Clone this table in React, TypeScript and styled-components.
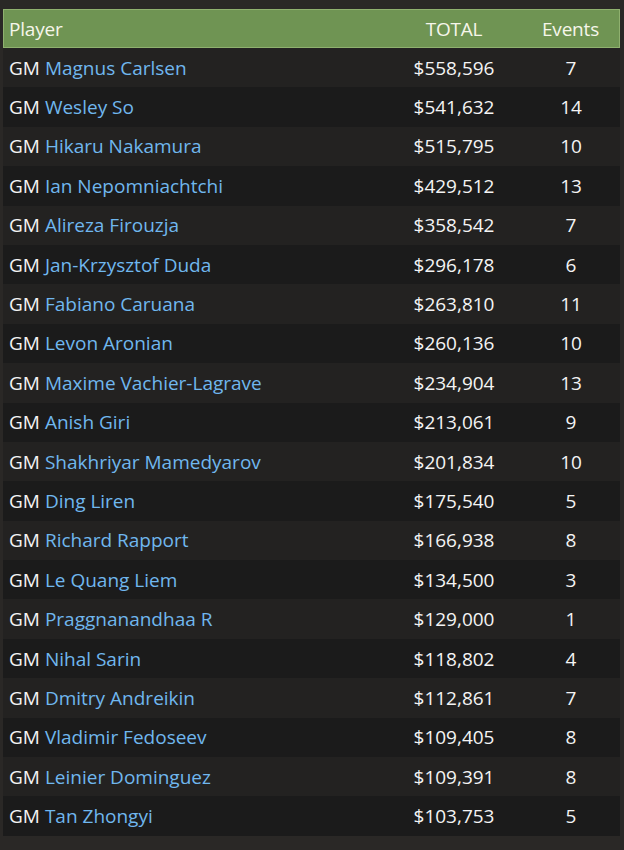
import React from "react";
import styled, { createGlobalStyle } from "styled-components";

const Global = createGlobalStyle`
  html, body { margin: 0; padding: 0; background: #2a2826; }
  body { font-family: "Open Sans", "Noto Sans", Arial, sans-serif; }
`;

const Page = styled.div`
  padding: 9px 4px 14px 3px;
  background: #2a2826;
  min-height: 850px;
  box-sizing: border-box;
`;

const Table = styled.div`
  display: grid;
  grid-template-columns: 383px 136px 98px;
  width: 617px;
`;

const HeaderCell = styled.div<{ $align?: string }>`
  height: 39px;
  box-sizing: border-box;
  background: #6f9453;
  border-top: 1px solid #8fb16f;
  border-bottom: 1px solid #8fb16f;
  color: #f6f6ea;
  font-size: 19px;
  letter-spacing: -0.2px;
  display: flex;
  align-items: center;
  justify-content: ${(p) => p.$align || "flex-start"};
  padding-left: ${(p) => (p.$align ? "0" : "5px")};
  &:first-child { border-left: 1px solid #8fb16f; }
  &:nth-child(3) { border-right: 1px solid #8fb16f; }
`;

const Cell = styled.div<{ $odd: boolean; $align?: string }>`
  height: 39.4px;
  background: ${(p) => (p.$odd ? "#232221" : "#1b1b1b")};
  color: #f4f4f4;
  font-size: 19px;
  display: flex;
  align-items: center;
  justify-content: ${(p) => p.$align || "flex-start"};
  padding-left: ${(p) => (p.$align ? "0" : "6px")};
  white-space: nowrap;
`;

const Name = styled.span`
  color: #70b7ee;
  margin-left: 5px;
`;

const players: [string, string, number][] = [
  ["Magnus Carlsen", "$558,596", 7],
  ["Wesley So", "$541,632", 14],
  ["Hikaru Nakamura", "$515,795", 10],
  ["Ian Nepomniachtchi", "$429,512", 13],
  ["Alireza Firouzja", "$358,542", 7],
  ["Jan-Krzysztof Duda", "$296,178", 6],
  ["Fabiano Caruana", "$263,810", 11],
  ["Levon Aronian", "$260,136", 10],
  ["Maxime Vachier-Lagrave", "$234,904", 13],
  ["Anish Giri", "$213,061", 9],
  ["Shakhriyar Mamedyarov", "$201,834", 10],
  ["Ding Liren", "$175,540", 5],
  ["Richard Rapport", "$166,938", 8],
  ["Le Quang Liem", "$134,500", 3],
  ["Praggnanandhaa R", "$129,000", 1],
  ["Nihal Sarin", "$118,802", 4],
  ["Dmitry Andreikin", "$112,861", 7],
  ["Vladimir Fedoseev", "$109,405", 8],
  ["Leinier Dominguez", "$109,391", 8],
  ["Tan Zhongyi", "$103,753", 5],
];

export default function App() {
  return (
    <>
      <Global />
      <Page>
        <Table>
          <HeaderCell>Player</HeaderCell>
          <HeaderCell $align="center">TOTAL</HeaderCell>
          <HeaderCell $align="center">Events</HeaderCell>
          {players.map(([name, total, events], i) => {
            const odd = i % 2 === 0;
            return (
              <React.Fragment key={name}>
                <Cell $odd={odd}>
                  GM<Name>{name}</Name>
                </Cell>
                <Cell $odd={odd} $align="center">{total}</Cell>
                <Cell $odd={odd} $align="center">{events}</Cell>
              </React.Fragment>
            );
          })}
        </Table>
      </Page>
    </>
  );
}
